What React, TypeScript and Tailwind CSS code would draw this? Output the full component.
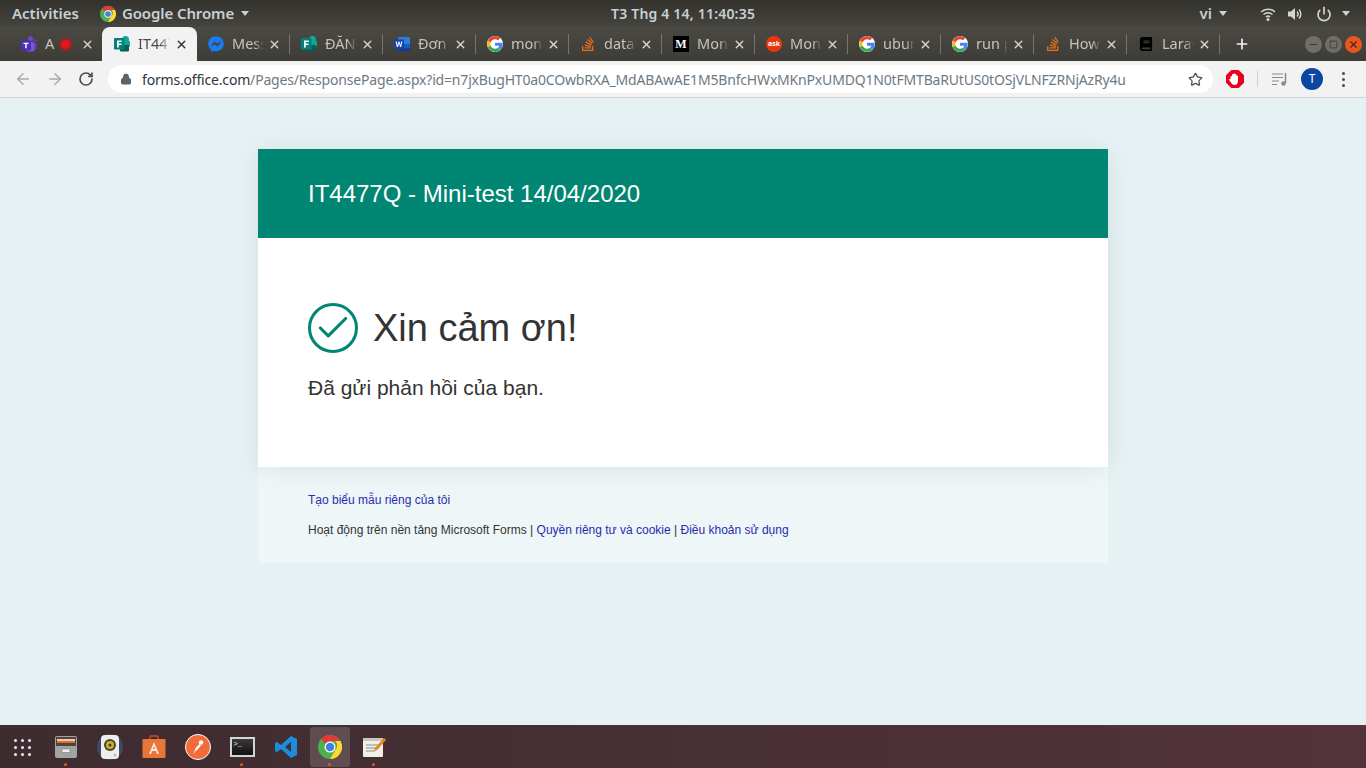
import { ArrowLeft, ArrowRight, RotateCw, Lock, Star, X, Plus, Minus, Square, Power, Check } from 'lucide-react'
import { FaFacebookMessenger, FaStackOverflow, FaBook } from 'react-icons/fa'
import type { ReactNode } from 'react'

function GoogleIcon() {
  return (
    <svg viewBox="0 0 48 48" className="w-4 h-4 rounded-full bg-white">
      <path fill="#EA4335" d="M24 9.5c3.5 0 6.700 1.200 9.200 3.600l6.900-6.900C35.900 2.400 30.500 0 24 0 14.600 0 6.500 5.400 2.600 13.200l8 6.200C12.500 13.700 17.800 9.500 24 9.500z" />
      <path fill="#4285F4" d="M47 24.500c0-1.600-.1-3.100-.4-4.500H24v9h12.900c-.6 3-2.200 5.500-4.700 7.200l7.700 6C44.400 37.900 47 31.800 47 24.500z" />
      <path fill="#FBBC05" d="M10.600 28.600c-.5-1.400-.8-3-.8-4.600s.3-3.200.8-4.600l-8-6.200C1 16.500 0 20.100 0 24s1 7.500 2.600 10.800l8-6.200z" />
      <path fill="#34A853" d="M24 48c6.500 0 11.900-2.100 15.900-5.800l-7.700-6c-2.200 1.400-4.900 2.300-8.200 2.300-6.200 0-11.500-4.200-13.400-9.900l-8 6.200C6.500 42.600 14.600 48 24 48z" />
    </svg>
  )
}

function FormsIcon() {
  return (
    <svg viewBox="0 0 16 16" className="w-4 h-4">
      <circle cx="11.500" cy="3.500" r="3.500" fill="#11a89c" />
      <rect x="6" y="5" width="10" height="5.500" fill="#1b9e94" />
      <rect x="6" y="9" width="9" height="6.500" rx="1" fill="#0a5c5a" />
      <rect x="0" y="2" width="10.500" height="11.500" rx="0.800" fill="#04807c" />
      <path d="M3 4.500h4.800v1.500H4.800v1.500h2.700v1.400H4.800V11.500H3z" fill="#fff" />
    </svg>
  )
}

function WordIcon() {
  return (
    <svg viewBox="0 0 16 16" className="w-4 h-4">
      <rect x="4" y="1" width="12" height="14" rx="1" fill="#2b7cd3" />
      <rect x="4" y="8" width="12" height="4" fill="#185abd" />
      <rect x="4" y="12" width="12" height="3" fill="#103f91" />
      <rect x="0" y="3.500" width="10" height="9.500" rx="1" fill="#1a3fae" />
      <path d="M1.500 5.500h1.200l.8 3.800.9-3.800h1.100l.9 3.800.8-3.800h1.200L7.100 11H6l-1-3.800L4 11H2.900z" fill="#fff" />
    </svg>
  )
}

function TeamsIcon() {
  return (
    <svg viewBox="0 0 16 16" className="w-4 h-4">
      <circle cx="9.500" cy="2.800" r="2.500" fill="#6a4bc4" />
      <circle cx="14" cy="4.800" r="1.800" fill="#5b3fb0" />
      <rect x="11" y="7" width="5" height="6.500" rx="2" fill="#5b3fb0" />
      <rect x="5" y="6" width="8.500" height="9.500" rx="2.500" fill="#7a55d8" />
      <rect x="0" y="4.500" width="10" height="10" rx="1" fill="#4f2fb8" />
      <path d="M2.500 6.800h5V8H5.700v4.200H4.300V8H2.500z" fill="#fff" />
    </svg>
  )
}

function ChromeIcon({ size }: { size: string }) {
  return (
    <svg viewBox="0 0 48 48" className={size}>
      <circle cx="24" cy="24" r="24" fill="#4caf50" />
      <path d="M24 0a24 24 0 0 1 20.800 12H24a12 12 0 0 0-10.400 6L6.200 7.700A24 24 0 0 1 24 0z" fill="#e53935" />
      <path d="M44.800 12A24 24 0 0 1 24 48l10.400-18a12 12 0 0 0 0-18z" fill="#fdd835" />
      <circle cx="24" cy="24" r="11" fill="#fff" />
      <circle cx="24" cy="24" r="8.500" fill="#3f7fe0" />
    </svg>
  )
}

function Tab({ icon, label, active, extra }: { icon: ReactNode; label: string; active?: boolean; extra?: ReactNode }) {
  return (
    <div
      className={
        active
          ? 'relative w-[95px] -mr-px h-[34px] flex items-center pl-3 bg-[#f2f2f2] rounded-t-[8px] text-[#4a4a4a] shrink-0'
          : 'relative w-[93px] h-[34px] flex items-center pl-3 text-[#c4c3bd] shrink-0'
      }
    >
      <div className="w-4 h-4 flex items-center justify-center shrink-0">{icon}</div>
      <div className={extra ? 'ml-2 w-[14px] overflow-hidden whitespace-nowrap text-[14.500px]' : 'ml-2 w-[32px] overflow-hidden whitespace-nowrap text-[14.500px] [mask-image:linear-gradient(to_right,black_70%,transparent)]'}>
        {label}
      </div>
      {extra}
      <X className={active ? 'w-[13px] h-[13px] absolute left-[73px] text-[#333]' : 'w-[13px] h-[13px] absolute left-[72px] text-[#d8d7d2]'} strokeWidth={2.500} />
    </div>
  )
}

function Sep() {
  return <div className="w-px h-[20px] bg-[#77766f] shrink-0 -mx-[0.500px] z-10" />
}

function DockItem({ children, dot, active }: { children: ReactNode; dot?: boolean; active?: boolean }) {
  return (
    <div className={active ? 'relative w-10 h-10 mx-[2px] flex items-center justify-center bg-white/15 rounded-[3px]' : 'relative w-10 h-10 mx-[2px] flex items-center justify-center'}>
      {children}
      {dot && <div className="absolute bottom-[1px] left-[18px] w-[3px] h-[3px] rounded-full bg-[#e95420]" />}
    </div>
  )
}

export default function App() {
  return (
    <div className="w-[1366px] h-[768px] overflow-hidden flex flex-col font-['Liberation_Sans',sans-serif] bg-[#e6f1f3]">
      {/* gnome top bar */}
      <div className="h-[27px] shrink-0 bg-gradient-to-b from-[#33322d] to-[#45443e] flex items-center text-[15px] font-semibold text-[#c9d0d4] font-['Noto_Sans',sans-serif] relative">
        <span className="ml-[12px]">Activities</span>
        <div className="ml-[21px] flex items-center">
          <ChromeIcon size="w-[16px] h-[16px]" />
          <span className="ml-[6px] tracking-[-0.100px]">Google Chrome</span>
          <span className="ml-[7px] w-0 h-0 border-x-[4.500px] border-x-transparent border-t-[5px] border-t-[#c9d0d4]" />
        </div>
        <span className="absolute left-[611px] text-[14px] tracking-[0.200px]">T3 Thg 4 14, 11:40:35</span>
        <div className="ml-auto mr-[16px] flex items-center">
          <span>vi</span>
          <span className="ml-[7px] w-0 h-0 border-x-[4.500px] border-x-transparent border-t-[5px] border-t-[#c9d0d4]" />
          <svg viewBox="0 0 16 16" className="ml-[33px] w-[16px] h-[16px] text-[#d4d4d0]">
            <path d="M1 6a10 10 0 0 1 14 0M3.500 8.500a6.500 6.500 0 0 1 9 0M6 11a3 3 0 0 1 4 0" stroke="currentColor" strokeWidth="1.500" fill="none" />
            <circle cx="8" cy="13.500" r="1.500" fill="currentColor" />
          </svg>
          <svg viewBox="0 0 16 16" className="ml-[11px] w-[16px] h-[16px] text-[#d4d4d0]">
            <path d="M1 5.500h3L8 2v12L4 10.500H1z" fill="currentColor" />
            <path d="M10 5.500a3.500 3.500 0 0 1 0 5M12 3.500a6.500 6.500 0 0 1 0 9" stroke="currentColor" strokeWidth="1.500" fill="none" />
          </svg>
          <Power className="ml-[13px] w-[16px] h-[16px] text-[#d4d4d0]" strokeWidth={2.500} />
          <span className="ml-[10px] w-0 h-0 border-x-[4.500px] border-x-transparent border-t-[5px] border-t-[#c9d0d4]" />
        </div>
      </div>

      {/* tab strip */}
      <div className="h-[34px] shrink-0 bg-gradient-to-b from-[#4a4943] to-[#3d3c36] flex items-center pl-[9px] font-['Noto_Sans',sans-serif]">
        <Tab icon={<TeamsIcon />} label="A" extra={<div className="w-[13px] h-[13px] rounded-full border border-[#f00] flex items-center justify-center"><div className="w-[9px] h-[9px] rounded-full bg-[#e8141c]" /></div>} />
        <Tab icon={<FormsIcon />} label="IT4477Q" active />
        <Tab icon={<FaFacebookMessenger className="w-4 h-4 text-[#1a7cf2]" />} label="Messenger" />
        <Sep />
        <Tab icon={<FormsIcon />} label="ĐĂNG KÝ" />
        <Sep />
        <Tab icon={<WordIcon />} label="Đơn xin" />
        <Sep />
        <Tab icon={<GoogleIcon />} label="mongo" />
        <Sep />
        <Tab icon={<FaStackOverflow className="w-4 h-4 text-[#e8701a]" />} label="database" />
        <Sep />
        <Tab icon={<div className="w-4 h-4 bg-black text-white text-[12px] font-bold font-['Liberation_Serif',serif] flex items-center justify-center">M</div>} label="Mongo" />
        <Sep />
        <Tab icon={<div className="w-4 h-4 rounded-full bg-[#e8360e] text-white text-[7px] font-bold flex items-center justify-center">ask</div>} label="Mongo" />
        <Sep />
        <Tab icon={<GoogleIcon />} label="ubuntu" />
        <Sep />
        <Tab icon={<GoogleIcon />} label="run php" />
        <Sep />
        <Tab icon={<FaStackOverflow className="w-4 h-4 text-[#e8701a]" />} label="How to" />
        <Sep />
        <Tab icon={<FaBook className="w-[14px] h-[14px] text-black" />} label="Laravel" />
        <Sep />
        <Plus className="ml-[15px] w-[16px] h-[16px] text-[#f2f2f2]" strokeWidth={2.500} />
        <div className="ml-auto mr-[4px] flex items-center gap-[3px]">
          <div className="w-[17px] h-[17px] rounded-full bg-[#6f6e68] flex items-center justify-center">
            <Minus className="w-[11px] h-[11px] text-[#35342f]" strokeWidth={2.500} />
          </div>
          <div className="w-[17px] h-[17px] rounded-full bg-[#6f6e68] flex items-center justify-center">
            <Square className="w-[9px] h-[9px] text-[#35342f]" strokeWidth={2} />
          </div>
          <div className="w-[17px] h-[17px] rounded-full bg-[#e9561f] flex items-center justify-center">
            <X className="w-[11px] h-[11px] text-[#4a2516]" strokeWidth={2.500} />
          </div>
        </div>
      </div>

      {/* chrome toolbar */}
      <div className="h-[37px] shrink-0 bg-[#f2f2f2] border-b border-[#d4d4d4] flex items-center pl-[14px] font-['Noto_Sans',sans-serif]">
        <ArrowLeft className="w-[18px] h-[18px] text-[#a9a9a9]" strokeWidth={2} />
        <ArrowRight className="ml-[14px] w-[18px] h-[18px] text-[#a9a9a9]" strokeWidth={2} />
        <RotateCw className="ml-[14px] w-[16px] h-[16px] text-[#4d4d4d]" strokeWidth={2.500} />
        <div className="ml-[14px] w-[1105px] h-[28px] rounded-full bg-white flex items-center pl-[12px] shrink-0">
          <Lock className="w-[12px] h-[12px] text-[#5f6368] shrink-0" fill="#5f6368" />
          <div className="ml-[10px] text-[14px] whitespace-nowrap tracking-[-0.180px]">
            <span className="text-[#30363d]">forms.office.com</span>
            <span className="text-[#6c7a86]">/Pages/ResponsePage.aspx?id=n7jxBugHT0a0COwbRXA_MdABAwAE1M5BnfcHWxMKnPxUMDQ1N0tFMTBaRUtUS0tOSjVLNFZRNjAzRy4u</span>
          </div>
          <Star className="ml-auto mr-[10px] w-[15px] h-[15px] text-[#4d4d4d] shrink-0" strokeWidth={2} />
        </div>
        <svg viewBox="0 0 18 18" className="ml-[13px] w-[18px] h-[18px] shrink-0">
          <path d="M5.300 0h7.400L18 5.300v7.400L12.700 18H5.300L0 12.700V5.300z" fill="#e8001c" />
          <path d="M4.500 9.500V6.500a.8.8 0 0 1 1.500 0V4.500a.8.8 0 0 1 1.500 0V3.700a.8.8 0 0 1 1.500 0V4.500a.8.8 0 0 1 1.500 0v1.500a.8.8 0 0 1 1.500 0V11c0 2.500-1.500 4-3.500 4-1.800 0-2.800-1-3.500-2.500L3 9.800c-.3-.8.800-1.300 1.500-.3z" fill="#fff" />
        </svg>
        <div className="ml-[13px] w-px h-[16px] bg-[#cfcfcf]" />
        <svg viewBox="0 0 16 16" className="ml-[14px] w-[16px] h-[16px] text-[#8a8a8a]">
          <path d="M0 3h11M0 6.500h11M0 10h7M0 13.500h5" stroke="currentColor" strokeWidth="1.200" fill="none" />
          <path d="M13.500 2v10" stroke="currentColor" strokeWidth="1.500" />
          <circle cx="11.500" cy="12.500" r="2.300" fill="currentColor" />
        </svg>
        <div className="ml-[13px] w-[22px] h-[22px] rounded-full bg-[#0b47a1] text-white text-[12px] flex items-center justify-center">T</div>
        <div className="ml-[19px] flex flex-col gap-[3px]">
          <div className="w-[3px] h-[3px] rounded-full bg-[#4d4d4d]" />
          <div className="w-[3px] h-[3px] rounded-full bg-[#4d4d4d]" />
          <div className="w-[3px] h-[3px] rounded-full bg-[#4d4d4d]" />
        </div>
      </div>

      {/* page */}
      <div className="flex-1 flex flex-col items-center pt-[51px] bg-[#e6f1f3]">
        <div className="w-[850px]">
          <div className="relative z-10 bg-white shadow-[0_2px_24px_rgba(0,0,0,0.08)]">
            <div className="h-[89px] bg-[#008672] flex items-center pl-[50px] text-white text-[24px]">IT4477Q - Mini-test 14/04/2020</div>
            <div className="h-[229px] pl-[50px] pt-[65px]">
              <div className="flex items-center">
                <div className="w-[50px] h-[50px] rounded-full border-[3px] border-[#008672] flex items-center justify-center">
                  <Check className="w-[38px] h-[38px] text-[#008672]" strokeWidth={2} />
                </div>
                <div className="ml-[15px] text-[38px] leading-[50px] text-[#333]">Xin cảm ơn!</div>
              </div>
              <div className="mt-[20px] text-[21px] leading-[30px] text-[#333]">Đã gửi phản hồi của bạn.</div>
            </div>
          </div>
          <div className="h-[96px] bg-[#eef6f8] pl-[50px] pt-[24px] text-[12px] leading-[18px] text-[#333]">
            <div className="text-[#2a2ab0]">Tạo biểu mẫu riêng của tôi</div>
            <div className="mt-[12px]">
              Hoạt động trên nền tảng Microsoft Forms | <span className="text-[#2a2ab0]">Quyền riêng tư và cookie</span> | <span className="text-[#2a2ab0]">Điều khoản sử dụng</span>
            </div>
          </div>
        </div>
      </div>

      {/* dock */}
      <div className="h-[43px] shrink-0 bg-gradient-to-r from-[#3d2c30] to-[#53333a] flex items-start pt-[2px]">
        <DockItem>
          <div className="grid grid-cols-3 gap-[4px]">
            {[0, 1, 2, 3, 4, 5, 6, 7, 8].map((i) => (
              <div key={i} className="w-[3px] h-[3px] rounded-full bg-[#f0f0f0]" />
            ))}
          </div>
        </DockItem>
        <DockItem dot>
          <svg viewBox="0 0 24 24" className="w-6 h-6">
            <rect x="1" y="1" width="22" height="22" rx="2" fill="#a3a3a1" />
            <rect x="2" y="2" width="20" height="9" fill="#4a4643" />
            <rect x="3" y="4" width="18" height="2" fill="#f6c7a0" />
            <rect x="3" y="6" width="18" height="2" fill="#e2702c" />
            <rect x="8" y="14" width="8" height="3.500" rx="0.500" fill="#efefef" stroke="#666" strokeWidth="0.500" />
          </svg>
        </DockItem>
        <DockItem>
          <div className="absolute w-[26px] h-[26px] rounded-full bg-[#3f4a66]" />
          <svg viewBox="0 0 24 24" className="relative w-6 h-6">
            <rect x="3" y="0" width="18" height="24" rx="4" fill="#eeeeec" />
            <circle cx="12" cy="10" r="6" fill="#4c4630" />
            <circle cx="12" cy="10" r="4" fill="#c7b12d" />
            <circle cx="12" cy="10" r="1.500" fill="#3a3a2a" />
            <circle cx="17" cy="20" r="1.500" fill="#bdbdbd" />
          </svg>
        </DockItem>
        <DockItem>
          <svg viewBox="0 0 24 24" className="w-6 h-6">
            <path d="M8 4V2a1 1 0 0 1 1-1h6a1 1 0 0 1 1 1v2" stroke="#c9501c" strokeWidth="1.500" fill="none" />
            <rect x="0.500" y="4" width="23" height="19" rx="1" fill="#e8763a" />
            <path d="M12 7l-5 12h2l1-3h4l1 3h2z M11 14l1-3 1 3z" fill="#fbe7da" fillRule="evenodd" />
          </svg>
        </DockItem>
        <DockItem>
          <div className="w-[26px] h-[26px] rounded-full bg-[#f26b38] border border-white flex items-center justify-center">
            <svg viewBox="0 0 24 24" className="w-[18px] h-[18px]">
              <circle cx="16" cy="6" r="3" fill="#fff" />
              <path d="M14 8l2 2-5 6-2 1-4 5 3-6 1-3z" fill="#fff" />
            </svg>
          </div>
        </DockItem>
        <DockItem dot>
          <div className="w-[25px] h-[20px] bg-gradient-to-b from-[#3a3a3a] to-[#111] border-[2px] border-[#d4d4d0] pl-[2px] pt-[1px] text-[#eee] text-[7px] leading-[8px] font-['Liberation_Mono',monospace]">&gt;_</div>
        </DockItem>
        <DockItem>
          <svg viewBox="0 0 24 24" className="w-6 h-6">
            <path d="M17 1l6 3v16l-6 3-10-9-4 3-2-1V8l2-1 4 3z M17 7l-6 5 6 5z" fill="#1b8fdc" fillRule="evenodd" />
          </svg>
        </DockItem>
        <DockItem dot active>
          <ChromeIcon size="w-6 h-6" />
        </DockItem>
        <DockItem dot>
          <svg viewBox="0 0 24 24" className="w-6 h-6">
            <rect x="1" y="3" width="20" height="19" rx="1" fill="#f0efe8" />
            <path d="M1 3h20v3H1z" fill="#c9c7bd" />
            <path d="M4 10h13M4 13h13M4 16h9" stroke="#8d8d85" strokeWidth="1" />
            <path d="M22 3l2 2-9 10-3 1 1-3z" fill="#e8851f" />
          </svg>
        </DockItem>
      </div>
    </div>
  )
}
